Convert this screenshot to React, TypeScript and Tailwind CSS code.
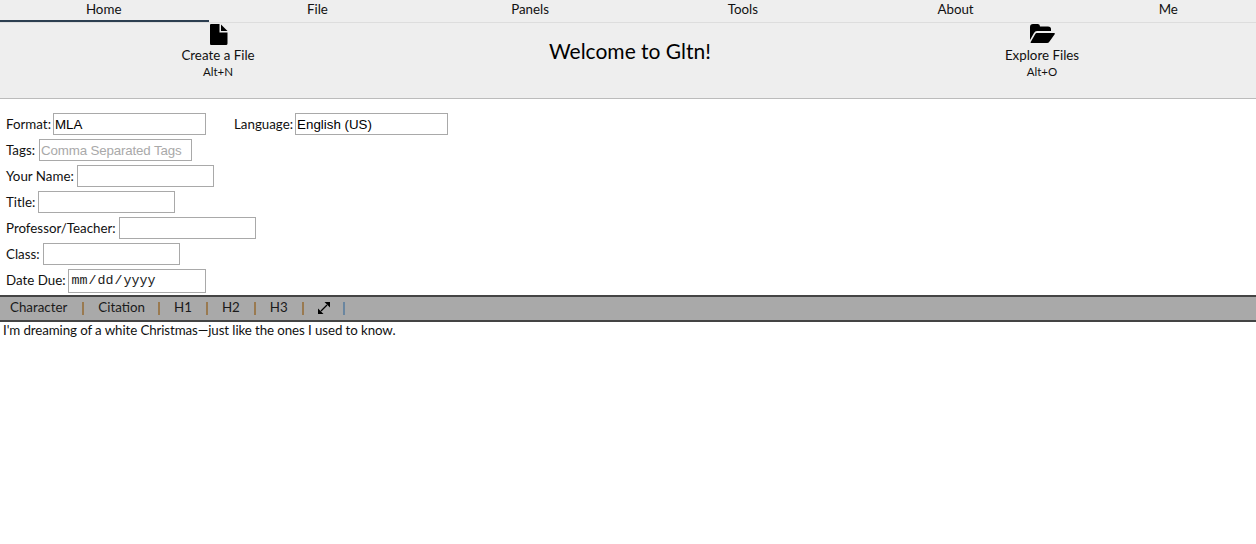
const tabs = ["Home", "File", "Panels", "Tools", "About", "Me"];

function Field({ label, value, placeholder, width, gap = "gap-[2px]" }: { label: string; value?: string; placeholder?: string; width: string; gap?: string }) {
  return (
    <div className={`flex items-center ${gap}`}>
      <span className="mt-[1px]">{label}</span>
      <input
        readOnly
        value={value ?? ""}
        placeholder={placeholder}
        className={`${width} h-[22px] border border-[#a9a9a9] px-[1px] text-[13.33px] text-black placeholder:text-[#a9a9a9] placeholder:tracking-[-0.15px] outline-none font-['Liberation_Sans',sans-serif]`}
      />
    </div>
  );
}

function ToolbarAction({ icon, title, hint }: { icon: React.ReactNode; title: string; hint: string }) {
  return (
    <div className="flex flex-col items-center">
      <div className="h-[21px] flex items-start">{icon}</div>
      <div className="leading-[17px] mt-[2px]">{title}</div>
      <div className="text-[11.5px] leading-[15px]">{hint}</div>
    </div>
  );
}

function FileIcon() {
  return (
    <svg width="18" height="21" viewBox="0 0 18 21" className="ml-[1px] text-black" fill="currentColor">
      <path d="M1 0H9.5V8.5H17.5V19.5Q17.5 21 16 21H1Q0 21 0 19.5V1Q0 0 1 0Z" />
      <path d="M11 0.5L17.5 7H11Z" />
    </svg>
  );
}

function FolderIcon() {
  return (
    <svg width="25" height="19" viewBox="0 0 25 19" className="text-black" fill="currentColor">
      <path d="M0 3Q0 0 3 0H8Q10 0 10 2.5H18Q21 2.5 21 5V7H7Q5 7 4 9L0 16Z" />
      <path d="M6.5 9H24Q25.5 9 24.5 10.5L19.5 17.5Q18.5 19 17 19H1.5Q0 19 1 17.5L5 10.5Q5.5 9 6.5 9Z" />
    </svg>
  );
}

function ExpandIcon() {
  return (
    <svg width="12" height="12" viewBox="0 0 12 12" className="text-black" fill="currentColor">
      <path d="M6.5 0H12V5.5Z" />
      <path d="M0 6.5V12H5.5Z" />
      <path d="M3 9L9 3" stroke="currentColor" strokeWidth="1.2" />
    </svg>
  );
}

function Sep({ className }: { className: string }) {
  return <span className={`w-[2px] h-[13px] ${className}`} />;
}

export default function App() {
  return (
    <div className="min-h-[544px] bg-white text-[13.33px] text-[#111] font-['Lato',sans-serif] overflow-hidden">
      {/* tabs */}
      <div className="flex gap-[3.4px] h-[23px] bg-[#eeeeee] border-b border-[#dddddd]">
        {tabs.map((t, i) => (
          <div
            key={t}
            className={`w-[209.33px] shrink-0 h-[22px] text-center leading-[18px] ${i === 0 ? "border-b-[2px] border-[#2c3e50] pr-[2px]" : ""}`}
          >
            {t}
          </div>
        ))}
      </div>

      {/* header */}
      <div className="grid grid-cols-3 pl-3 pr-2 h-[75px] bg-[#eeeeee] border-b border-[#bbbbbb] box-content">
        <div className="pt-[1px]">
          <ToolbarAction icon={<FileIcon />} title="Create a File" hint="Alt+N" />
        </div>
        <div className="text-center text-[21px] leading-[26px] pt-[15px] text-black">Welcome to Gltn!</div>
        <div className="pt-[1px]">
          <ToolbarAction icon={<FolderIcon />} title="Explore Files" hint="Alt+O" />
        </div>
      </div>

      {/* form */}
      <div className="pl-[6px] pt-[14px] flex flex-col gap-[4px]">
        <div className="flex gap-[28px]">
          <Field label="Format:" value="MLA" width="w-[153px]" />
          <Field label="Language:" value="English (US)" width="w-[153px]" />
        </div>
        <Field label="Tags:" placeholder="Comma Separated Tags" width="w-[153px]" gap="gap-[4px]" />
        <Field label="Your Name:" width="w-[137px]" gap="gap-[3px]" />
        <Field label="Title:" width="w-[137px]" gap="gap-[3px]" />
        <Field label="Professor/Teacher:" width="w-[137px]" gap="gap-[3px]" />
        <Field label="Class:" width="w-[137px]" gap="gap-[3px]" />
        <div className="flex items-center gap-[2px]">
          <span>Date Due:</span>
          <input
            type="date"
            readOnly
            className="w-[138px] h-[24px] border border-[#a9a9a9] px-[2px] text-[13.33px] text-[#222] outline-none font-['Liberation_Mono',monospace] [&::-webkit-calendar-picker-indicator]:hidden"
          />
        </div>
      </div>

      {/* editor toolbar */}
      <div className="flex items-center h-[27px] mt-[2px] pb-[1px] bg-[#a9a9a9] border-y-2 border-[#444444] text-[#1a1a1a] pl-[10px]">
        <span>Character</span>
        <Sep className="bg-[#9a7a50] ml-[14.5px] mr-[14.5px]" />
        <span>Citation</span>
        <Sep className="bg-[#9a7a50] ml-[13px] mr-[14px]" />
        <span>H1</span>
        <Sep className="bg-[#9a7a50] ml-[14px] mr-[14px]" />
        <span>H2</span>
        <Sep className="bg-[#9a7a50] ml-[14px] mr-[14px]" />
        <span>H3</span>
        <Sep className="bg-[#9a7a50] ml-[14px] mr-[14px]" />
        <ExpandIcon />
        <Sep className="bg-[#6a86a0] ml-[13px]" />
      </div>

      {/* document */}
      <div className="pl-[3px] leading-[17px] tracking-[-0.1px]">I'm dreaming of a white Christmas—just like the ones I used to know.</div>
    </div>
  );
}
